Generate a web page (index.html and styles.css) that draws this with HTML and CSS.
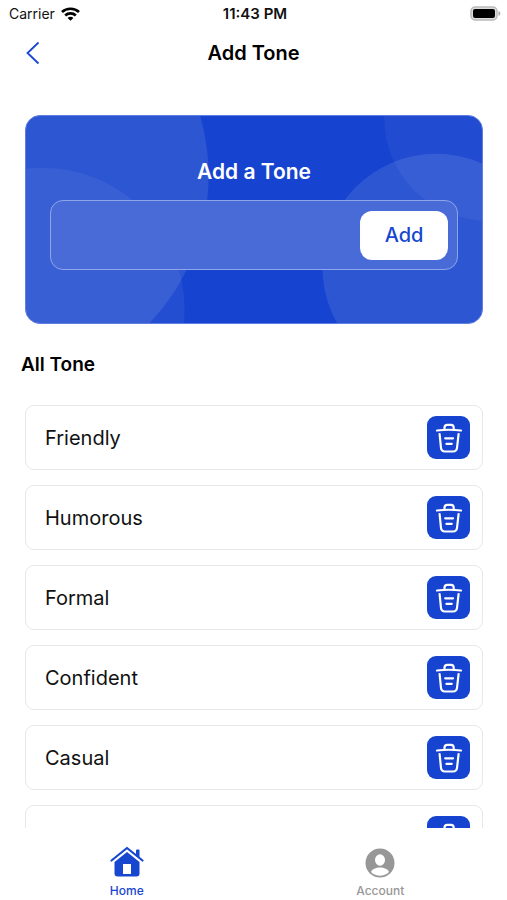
FILE: index.html
```html
<!DOCTYPE html>
<html lang="en">
<head>
  <meta charset="UTF-8" />
  <meta name="viewport" content="width=device-width, initial-scale=1" />
  <title>Add Tone</title>
  <link rel="stylesheet" href="styles.css">
</head>
<body>
  <svg width="0" height="0" class="sprite" aria-hidden="true">
    <symbol id="trash" viewBox="0 0 28 32" fill="none" stroke="#fff" stroke-width="2.200" stroke-linecap="round" stroke-linejoin="round">
      <path d="M2 8.500C9 7.600 19 7.600 26 8.500" />
      <path d="M9.500 7.500V5.500Q9.500 2.800 12.200 2.800H16Q18.700 2.800 18.700 5.500V7.500" />
      <path d="M4.600 12L6 26Q6.400 29.500 10 29.500H18Q21.600 29.500 22 26L23.600 12" />
      <path d="M10.200 16.300H18M11.400 21.800H16.800" />
    </symbol>
  </svg>

  <div class="status-bar">
    <div class="carrier">
      <span>Carrier</span>
      <svg width="19" height="14" viewBox="0 0 19 14" fill="none" stroke="#000" stroke-width="2.600">
        <path d="M1 5C5.500 .6 13.500 .6 18 5" />
        <path d="M4.200 8.500C7 5.700 12 5.700 14.800 8.500" />
        <path d="M9.500 13.800L6.600 10.900C8.200 9.400 10.800 9.400 12.400 10.900Z" fill="#000" stroke="none" />
      </svg>
    </div>
    <span class="time">11:43 PM</span>
    <svg class="battery" width="31" height="15" viewBox="0 0 31 15">
      <rect x="1" y="1" width="26" height="13" rx="4" fill="#ddd" stroke="#bbb" stroke-width="1.500" />
      <rect x="3" y="3" width="22" height="9" rx="2" fill="#000" />
      <path d="M28.500 5C31 6 31 9 28.500 10Z" fill="#aaa" />
    </svg>
  </div>

  <header class="header">
    <button type="button" class="back" aria-label="Back">
      <svg width="14" height="24" viewBox="0 0 14 24" fill="none" stroke="#1847cf" stroke-width="1.800">
        <path d="M12.500 1.500L1.500 12L12.500 22.500" />
      </svg>
    </button>
    <h1>Add Tone</h1>
  </header>

  <main class="content">
    <form class="add-card" id="toneForm">
      <svg class="bubbles" viewBox="0 0 457 208" preserveAspectRatio="none" aria-hidden="true">
        <circle cx="-32" cy="60" r="215" fill="#fff" fill-opacity=".1" />
        <circle cx="16" cy="195" r="143" fill="#fff" fill-opacity=".06" />
        <circle cx="462" cy="2" r="103" fill="#fff" fill-opacity=".05" />
        <circle cx="411" cy="152" r="114" fill="#fff" fill-opacity=".1" />
      </svg>
      <label for="tone">Add a Tone</label>
      <div class="input-box">
        <input type="text" id="tone" name="tone" />
        <button type="submit">Add</button>
      </div>
    </form>

    <h2>All Tone</h2>

    <ul class="tone-list">
      <li>
        <span>Friendly</span>
        <button type="button" aria-label="Delete Friendly"><svg width="28" height="32"><use href="#trash" /></svg></button>
      </li>
      <li>
        <span>Humorous</span>
        <button type="button" aria-label="Delete Humorous"><svg width="28" height="32"><use href="#trash" /></svg></button>
      </li>
      <li>
        <span>Formal</span>
        <button type="button" aria-label="Delete Formal"><svg width="28" height="32"><use href="#trash" /></svg></button>
      </li>
      <li>
        <span>Confident</span>
        <button type="button" aria-label="Delete Confident"><svg width="28" height="32"><use href="#trash" /></svg></button>
      </li>
      <li>
        <span>Casual</span>
        <button type="button" aria-label="Delete Casual"><svg width="28" height="32"><use href="#trash" /></svg></button>
      </li>
      <li>
        <span></span>
        <button type="button" aria-label="Delete"><svg width="28" height="32"><use href="#trash" /></svg></button>
      </li>
    </ul>
  </main>

  <nav class="tab-bar">
    <a href="#home" class="active">
      <svg width="34" height="32" viewBox="0 0 34 32">
        <path d="M26 4.500Q26 3.500 27 3.500H28.500Q29.500 3.500 29.500 4.500V12L26 9Z" fill="#1847cf" />
        <path d="M1.500 14.500L17 2L32.500 14.500" fill="none" stroke="#1847cf" stroke-width="2.200" stroke-linecap="round" stroke-linejoin="round" />
        <path d="M17 6L29.500 16V27.500Q29.500 30.500 26.500 30.500H7.500Q4.500 30.500 4.500 27.500V16Z" fill="#1847cf" />
        <rect x="13" y="18" width="8" height="10" fill="#fff" />
      </svg>
      <span>Home</span>
    </a>
    <a href="#account">
      <svg width="30" height="32" viewBox="0 0 30 32">
        <circle cx="15" cy="17" r="14.500" fill="#979797" />
        <ellipse cx="15" cy="14" rx="5" ry="5.800" fill="#fff" />
        <path d="M6 26C8 20 22 20 24 26C19 31 11 31 6 26Z" fill="#fff" />
      </svg>
      <span>Account</span>
    </a>
  </nav>

<script>
  const form = document.getElementById('toneForm');
  const list = document.querySelector('.tone-list');

  form.addEventListener('submit', function (event) {
    event.preventDefault();
    const name = form.tone.value.trim();
    if (name === '') return;
    const item = list.firstElementChild.cloneNode(true);
    item.querySelector('span').textContent = name;
    item.querySelector('button').setAttribute('aria-label', 'Delete ' + name);
    list.appendChild(item);
    form.reset();
  });

  list.addEventListener('click', function (event) {
    const button = event.target.closest('button');
    if (button) button.parentElement.remove();
  });
</script>
</body>
</html>
```
FILE: styles.css
```css
* {
  box-sizing: border-box;
}
body {
  margin: 0;
  height: 100vh;
  display: flex;
  flex-direction: column;
  background: #fff;
  color: #111;
  font-family: Inter, sans-serif;
}
button {
  border: none;
  padding: 0;
  font-family: inherit;
  cursor: pointer;
}
svg {
  display: block;
}
.sprite {
  display: none;
}
.status-bar {
  display: grid;
  grid-template-columns: 1fr auto 1fr;
  align-items: center;
  height: 27px;
  padding: 0 6px 0 9px;
  font-size: 14px;
}
.carrier {
  display: flex;
  align-items: center;
  gap: 6px;
}
.time {
  font-size: 15px;
  font-weight: 600;
}
.battery {
  justify-self: end;
}
.header {
  display: grid;
  grid-template-columns: 1fr auto 1fr;
  align-items: center;
  height: 52px;
  padding: 0 26px;
}
.header h1 {
  margin: 0;
  color: #000;
  font-size: 20px;
  font-weight: 600;
}
.back {
  justify-self: start;
  background: none;
}
.content {
  flex: 1;
  min-height: 0;
  overflow: hidden;
  padding: 36px 24px 0 25px;
}
.add-card {
  position: relative;
  overflow: hidden;
  height: 209px;
  padding: 42px 24px 0;
  border: 1px solid #5f80e0;
  border-radius: 15px;
  background: #1643cf;
  text-align: center;
}
.bubbles {
  position: absolute;
  inset: 0;
  width: 100%;
  height: 100%;
}
.add-card label {
  position: relative;
  display: block;
  margin-bottom: 14px;
  color: #fff;
  font-size: 21px;
  font-weight: 600;
  line-height: 28px;
}
.input-box {
  position: relative;
  display: flex;
  align-items: center;
  height: 70px;
  padding: 0 9px 0 16px;
  border: 1px solid #8fa5e9;
  border-radius: 13px;
  background: #486bd8;
}
.input-box input {
  flex: 1;
  min-width: 0;
  height: 48px;
  border: none;
  outline: none;
  background: transparent;
  color: #fff;
  font-family: inherit;
  font-size: 20px;
}
.input-box button {
  width: 88px;
  height: 49px;
  border-radius: 12px;
  background: #fff;
  color: #1847cf;
  font-size: 20px;
  font-weight: 500;
}
h2 {
  margin: 27px 0 26px -4px;
  color: #000;
  font-size: 19px;
  font-weight: 600;
  line-height: 28px;
}
.tone-list {
  display: flex;
  flex-direction: column;
  gap: 15px;
  margin: 0;
  padding: 0;
  list-style: none;
}
.tone-list li {
  display: flex;
  align-items: center;
  justify-content: space-between;
  height: 65px;
  padding: 0 12px 0 19px;
  border: 1px solid #e8e8e8;
  border-radius: 9px;
  font-size: 20px;
}
.tone-list button {
  display: flex;
  align-items: center;
  justify-content: center;
  width: 43px;
  height: 43px;
  border-radius: 9px;
  background: #1643cf;
}
.tab-bar {
  display: flex;
  height: 72px;
  padding-top: 18px;
  background: #fff;
}
.tab-bar a {
  flex: 1;
  display: flex;
  flex-direction: column;
  align-items: center;
  gap: 5px;
  color: #979797;
  font-size: 12px;
  font-weight: 500;
  line-height: 16px;
  text-decoration: none;
}
.tab-bar .active {
  color: #1847cf;
}
```
